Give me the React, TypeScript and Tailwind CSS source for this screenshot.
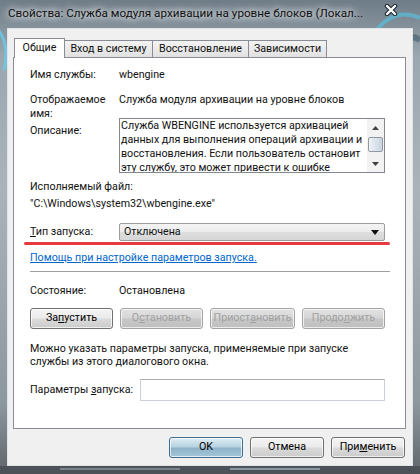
import React from 'react'

// Диалог "Свойства службы" в стиле Windows 7

const btnBase = 'flex items-center justify-center h-[21px] rounded-[3px] border leading-none whitespace-nowrap shadow-[inset_0_0_0_1px_rgba(255,255,255,0.7)]'
const btnNormal = 'border-[#707070] text-black bg-[linear-gradient(#f4f4f4_0%,#ebebeb_45%,#dadada_55%,#cbcbcb_100%)]'
const btnDisabled = 'border-[#a4a4a4] text-[#a0a0a0] bg-[linear-gradient(#e2e2e2_0%,#d6d6d6_45%,#c7c7c7_55%,#bfbfbf_100%)]'
const btnPrimary = 'border-[#3c6f92] text-black bg-[linear-gradient(#e1eef5_0%,#b7d3e2_45%,#8fb3c8_55%,#a3c6d8_100%)]'

function Btn({ children, kind = 'normal', w }: { children: React.ReactNode; kind?: 'normal' | 'disabled' | 'primary'; w: string }) {
    const look = kind === 'disabled' ? btnDisabled : kind === 'primary' ? btnPrimary : btnNormal
    return <div className={`${btnBase} ${look} ${w}`}>{children}</div>
}

function Tab({ label, active, w }: { label: string; active?: boolean; w: string }) {
    if (active) {
        return (
            <div className={`relative z-10 -mb-px h-[20px] ${w} flex items-center justify-center whitespace-nowrap border-x border-t border-[#898c95] bg-white`}>
                {label}
            </div>
        )
    }
    return (
        <div className={`h-[17px] ${w} flex items-center justify-center whitespace-nowrap border-r border-t border-[#898c95] bg-[linear-gradient(#f3f3f3,#e1e1e1)]`}>
            {label}
        </div>
    )
}

const Arrow = ({ up }: { up?: boolean }) => (
    <svg width="7" height="4" viewBox="0 0 7 4">
        <path d={up ? 'M0 4 L3.5 0 L7 4 Z' : 'M0 0 L7 0 L3.5 4 Z'} fill="#404040" />
    </svg>
)

export default function App() {
    return (
        <div className="relative w-[420px] h-[474px] overflow-hidden flex flex-col text-[10.7px] text-[#111] font-['Roboto','Noto_Sans',sans-serif] bg-[linear-gradient(180deg,#6f7d88_0%,#9ba7b0_12%,#aab3b9_40%,#8d979e_85%,#5f666c_100%)]">
            {/* стекло рамки: блики и завитки обоев */}
            <svg className="absolute inset-0 pointer-events-none" width="420" height="474" viewBox="0 0 420 474">
                <path d="M-10 20 Q12 40 4 70" stroke="#63d2f2" strokeWidth="3" fill="none" opacity="0.7" />
                <path d="M370 40 Q390 5 420 18" stroke="#53c6ea" strokeWidth="4" fill="none" opacity="0.6" />
                <path d="M395 55 Q405 30 420 40" stroke="#2d4e63" strokeWidth="6" fill="none" opacity="0.5" />
                <rect x="0" y="466" width="420" height="8" fill="#4c5257" />
                <rect x="60" y="468" width="120" height="2" fill="#9aa3a9" opacity="0.6" />
                <rect x="230" y="468" width="90" height="2" fill="#b3c4d0" opacity="0.6" />
            </svg>

            {/* заголовок окна */}
            <div className="relative h-[28px] shrink-0 flex items-center pl-[8px]">
                <span className="text-[11.7px] whitespace-nowrap text-[#111] [text-shadow:0_0_6px_#ffffff,0_0_10px_#ffffff]">
                    Свойства: Служба модуля архивации на уровне блоков (Локал...
                </span>
                <svg className="absolute left-[384px] top-[4px]" width="14" height="12" viewBox="0 0 14 12">
                    <path d="M3 2 L11 10 M11 2 L3 10" stroke="#1c2730" strokeWidth="4.5" strokeLinecap="round" />
                    <path d="M3 2 L11 10 M11 2 L3 10" stroke="#ffffff" strokeWidth="2.4" strokeLinecap="round" />
                </svg>
            </div>

            {/* клиентская область */}
            <div className="relative flex-1 mx-[7px] mb-[8px] border border-[#dfe4e8] bg-[#f0f0f0] pl-[5px] pr-[6px] pt-[9px] flex flex-col">
                <div className="flex items-end h-[19px] pl-[1px]">
                    <Tab label="Общие" active w="w-[51px]" />
                    <Tab label="Вход в систему" w="w-[88px]" />
                    <Tab label="Восстановление" w="w-[96px]" />
                    <Tab label="Зависимости" w="w-[78px]" />
                </div>

                <div className="h-[372px] w-[393px] border border-[#898c95] bg-white pl-[16px] pt-[9px] flex flex-col whitespace-nowrap">
                    <div className="flex h-[15px] leading-[15px]">
                        <div className="w-[89px]">Имя службы:</div>
                        <div>wbengine</div>
                    </div>

                    <div className="flex h-[25px] mt-[11px] leading-[14px]">
                        <div className="w-[89px]">Отображаемое<br />имя:</div>
                        <div>Служба модуля архивации на уровне блоков</div>
                    </div>

                    <div className="flex h-[55px]">
                        <div className="w-[89px] pt-[5px] leading-[15px]">Описание:</div>
                        <div className="w-[266px] h-[55px] border border-[#828790] flex overflow-hidden">
                            <div className="flex-1 pl-[1px] leading-[14px] overflow-hidden">
                                <div>Служба WBENGINE используется архивацией</div>
                                <div>данных для выполнения операций архивации и</div>
                                <div>восстановления. Если пользователь остановит</div>
                                <div>эту службу, это может привести к ошибке</div>
                            </div>
                            <div className="w-[17px] flex flex-col bg-[#f2f2f2]">
                                <div className="h-[17px] flex items-center justify-center"><Arrow up /></div>
                                <div className="h-[15px] mt-px mx-px rounded-[2px] border border-[#8d9aa6] bg-[linear-gradient(90deg,#eef3f7,#c9d4de)]" />
                                <div className="flex-1" />
                                <div className="h-[17px] flex items-center justify-center"><Arrow /></div>
                            </div>
                        </div>
                    </div>

                    <div className="mt-[6px] leading-[15px]">Исполняемый файл:</div>
                    <div className="mt-[2px] leading-[15px]">"C:\Windows\system32\wbengine.exe"</div>

                    <div className="flex items-center h-[18px] mt-[12px]">
                        <div className="w-[89px]"><span className="underline">Т</span>ип запуска:</div>
                        <div className="w-[266px] h-[18px] rounded-[2px] border border-[#9c9c9c] bg-[linear-gradient(#f4f4f4_0%,#ececec_50%,#dedede_50%,#d6d6d6_100%)] flex items-center pl-[4px] pr-[5px]">
                            <span className="flex-1">Отключена</span>
                            <svg width="8" height="5" viewBox="0 0 8 5"><path d="M0 0 L8 0 L4 5 Z" fill="#111" /></svg>
                        </div>
                    </div>
                    <div className="h-[3px] mt-px -ml-[6px] w-[366px] rounded-full bg-[#e63a40]" />

                    <div className="mt-[5px] leading-[15px] text-[#0066cc] underline">Помощь при настройке параметров запуска.</div>
                    <div className="mt-[6px] h-px w-[360px] bg-[#a0a0a0]" />

                    <div className="flex mt-[11px] leading-[15px]">
                        <div className="w-[89px]">Состояние:</div>
                        <div>Остановлена</div>
                    </div>

                    <div className="flex justify-between w-[355px] mt-[10px]">
                        <Btn w="w-[83px]">За<span className="underline">п</span>устить</Btn>
                        <Btn w="w-[83px]" kind="disabled">О<span className="underline">с</span>тановить</Btn>
                        <Btn w="w-[85px]" kind="disabled">Приост<span className="underline">а</span>новить</Btn>
                        <Btn w="w-[83px]" kind="disabled">Продо<span className="underline">л</span>жить</Btn>
                    </div>

                    <div className="mt-[13px] leading-[13px]">
                        Можно указать параметры запуска, применяемые при запуске<br />
                        службы из этого диалогового окна.
                    </div>

                    <div className="flex items-center h-[22px] mt-[11px]">
                        <div className="w-[110px]">Параметры <span className="underline">з</span>апуска:</div>
                        <div className="w-[245px] h-[22px] border border-[#c9d0d7] border-t-[#abadb3] bg-white" />
                    </div>
                </div>

                <div className="flex justify-end gap-[7px] mt-[8px] pr-px">
                    <Btn w="w-[74px]" kind="primary">OK</Btn>
                    <Btn w="w-[74px]">Отмена</Btn>
                    <Btn w="w-[74px]">При<span className="underline">м</span>енить</Btn>
                </div>
            </div>
        </div>
    )
}
